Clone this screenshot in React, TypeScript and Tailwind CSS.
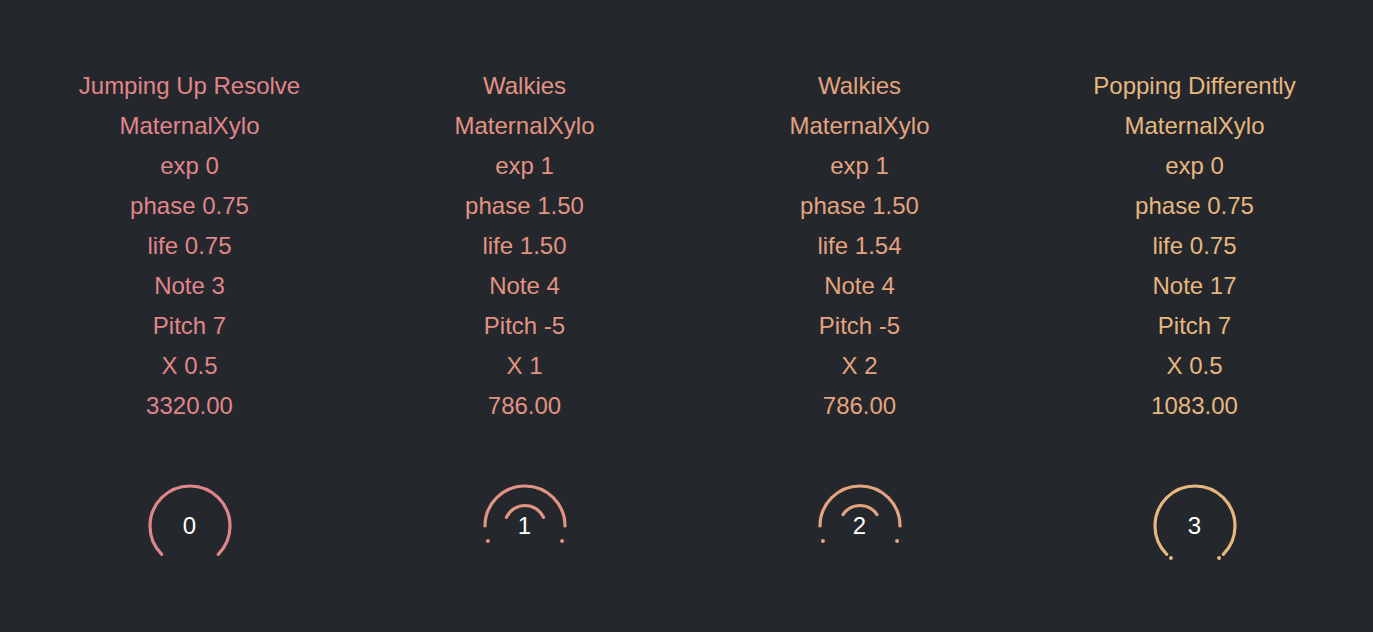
type Knob = {
  outer: [number, number];
  inner?: [number, number];
  dots?: [number, number];
};

type Voice = {
  name: string;
  instrument: string;
  exp: number;
  phase: string;
  life: string;
  note: number;
  pitch: number;
  x: string;
  freq: string;
  color: string;
  knob: Knob;
};

const voices: Voice[] = [
  {
    name: "Jumping Up Resolve",
    instrument: "MaternalXylo",
    exp: 0,
    phase: "0.75",
    life: "0.75",
    note: 3,
    pitch: 7,
    x: "0.5",
    freq: "3320.00",
    color: "#e0868a",
    knob: { outer: [225, -45] },
  },
  {
    name: "Walkies",
    instrument: "MaternalXylo",
    exp: 1,
    phase: "1.50",
    life: "1.50",
    note: 4,
    pitch: -5,
    x: "1",
    freq: "786.00",
    color: "#e29383",
    knob: { outer: [180, 0], inner: [155, 25], dots: [202, -22] },
  },
  {
    name: "Walkies",
    instrument: "MaternalXylo",
    exp: 1,
    phase: "1.50",
    life: "1.54",
    note: 4,
    pitch: -5,
    x: "2",
    freq: "786.00",
    color: "#e4a37f",
    knob: { outer: [180, 0], inner: [146, 34], dots: [202, -22] },
  },
  {
    name: "Popping Differently",
    instrument: "MaternalXylo",
    exp: 0,
    phase: "0.75",
    life: "0.75",
    note: 17,
    pitch: 7,
    x: "0.5",
    freq: "1083.00",
    color: "#e6b77e",
    knob: { outer: [225, -45], dots: [233, -53] },
  },
];

const C = 50;

function pt(r: number, deg: number) {
  const a = (deg * Math.PI) / 180;
  return [C + r * Math.cos(a), C - r * Math.sin(a)];
}

// clockwise arc (on screen) from angle a to angle b
function arc(r: number, a: number, b: number) {
  const [x1, y1] = pt(r, a);
  const [x2, y2] = pt(r, b);
  const large = a - b > 180 ? 1 : 0;
  return `M ${x1} ${y1} A ${r} ${r} 0 ${large} 1 ${x2} ${y2}`;
}

function KnobDial({ index, color, knob }: { index: number; color: string; knob: Knob }) {
  return (
    <div className="relative mt-[50px] h-[100px] w-[100px]">
      <svg width="100" height="100" viewBox="0 0 100 100">
        <path
          d={arc(40, knob.outer[0], knob.outer[1])}
          fill="none"
          stroke={color}
          strokeWidth="3.2"
          strokeLinecap="round"
        />
        {knob.inner && (
          <path
            d={arc(20.5, knob.inner[0], knob.inner[1])}
            fill="none"
            stroke={color}
            strokeWidth="3.2"
            strokeLinecap="round"
          />
        )}
        {knob.dots &&
          knob.dots.map((d) => {
            const [x, y] = pt(40, d);
            return <circle key={d} cx={x} cy={y} r="2" fill={color} />;
          })}
      </svg>
      {/* value label sits over the dial */}
      <div className="absolute inset-0 flex items-center justify-center text-[24px] leading-none text-white">
        {index}
      </div>
    </div>
  );
}

export default function App() {
  return (
    <div className="min-h-[632px] w-full bg-[#24272c] font-['Liberation_Sans',Arial,sans-serif]">
      <div className="flex pl-[22px] pt-[66px]">
        {voices.map((v, i) => (
          <div
            key={i}
            className="flex w-[335px] flex-col items-center text-[24px] leading-[40px]"
            style={{ color: v.color }}
          >
            <div>{v.name}</div>
            <div>{v.instrument}</div>
            <div>exp {v.exp}</div>
            <div>phase {v.phase}</div>
            <div>life {v.life}</div>
            <div>Note {v.note}</div>
            <div>Pitch {v.pitch}</div>
            <div>X {v.x}</div>
            <div>{v.freq}</div>
            <KnobDial index={i} color={v.color} knob={v.knob} />
          </div>
        ))}
      </div>
    </div>
  );
}
